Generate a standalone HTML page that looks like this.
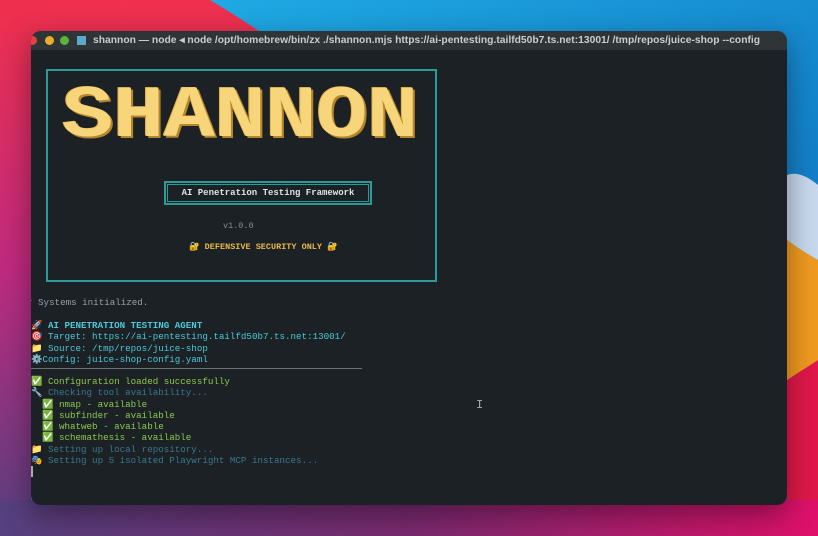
<!DOCTYPE html>
<html><head><meta charset="utf-8"><style>
*{margin:0;padding:0;box-sizing:border-box}
body{width:818px;height:536px;overflow:hidden;position:relative;font-family:"Liberation Mono",monospace;background:#6a3a8a}
.bg{position:absolute;inset:0}
.win{position:absolute;left:31px;top:31px;width:756px;height:474px;border-radius:10px;background:#1b2124;overflow:hidden;box-shadow:0 10px 30px rgba(0,0,0,.4)}
.tb{height:19px;background:#2f3537;color:#c8cccc;font:bold 10.3px "Liberation Sans",sans-serif;white-space:nowrap;line-height:19px;position:relative}
.dot{position:absolute;top:5px;width:9px;height:9px;border-radius:50%}
.box{position:absolute;left:15px;top:38px;width:391px;height:213px;border:2px solid #2b9b98}
.logo{position:absolute;left:14px;top:10px;font:bold 80px "Liberation Mono",monospace;letter-spacing:-0.5px;color:#f7d57a;text-shadow:2px 2px 0 #b8862a,-1px -1px 0 #e8b64a;transform:scale(1.07,0.92);transform-origin:top left;line-height:80px;white-space:nowrap}
.ib{position:absolute;left:116px;top:110px;width:208px;height:24px;border:2px solid #2b9b98;outline:1px solid #2b9b98;outline-offset:-4px;color:#e0e4e4;font-size:9px;font-weight:bold;text-align:center;line-height:20px}
.t{position:absolute;font-size:9.2px;white-space:pre;line-height:11.3px}
</style></head><body>
<svg class="bg" width="818" height="536" viewBox="0 0 818 536">
<defs>
<linearGradient id="b" x1="0" y1="0" x2="1" y2="1"><stop offset="0" stop-color="#22b4ea"/><stop offset="1" stop-color="#0b64b8"/></linearGradient>
<linearGradient id="bot" x1="0" y1="0" x2="1" y2="0"><stop offset="0" stop-color="#56407f"/><stop offset=".5" stop-color="#7a2a70"/><stop offset="1" stop-color="#e0106a"/></linearGradient>
<linearGradient id="l" x1="0" y1="0" x2="0" y2="1"><stop offset="0" stop-color="#f0304c"/><stop offset=".5" stop-color="#c02a80"/><stop offset="1" stop-color="#56407f"/></linearGradient>
</defs>
<rect width="818" height="536" fill="url(#b)"/>
<path d="M0 0H210Q260 30 300 60L31 60V536H0Z" fill="url(#l)"/>
<path d="M787 175Q800 170 818 185V260Q800 250 787 240Z" fill="#c8d8ee"/>
<path d="M787 240Q800 250 818 260V380L787 400Z" fill="#f09a20"/>
<path d="M787 380L818 360V536H787Z" fill="#e0184a"/>
<rect x="0" y="500" width="818" height="36" fill="url(#bot)"/>
</svg>
<div class="win">
<div class="tb"><span class="dot" style="left:-3px;background:#e0443e"></span><span class="dot" style="left:14px;background:#e8b02a"></span><span class="dot" style="left:29px;background:#5cb23c"></span><span style="position:absolute;left:46px;top:5px;width:9px;height:9px;background:#5ea8c8"></span><span style="position:absolute;left:62px">shannon — node ◂ node /opt/homebrew/bin/zx ./shannon.mjs https://ai-pentesting.tailfd50b7.ts.net:13001/ /tmp/repos/juice-shop --config</span></div>
<div class="box">
<div class="logo">SHANNON</div>
<div class="ib">AI Penetration Testing Framework</div>
<div class="t" style="left:175px;top:150px;color:#8a9090;font-size:8.5px">v1.0.0</div>
<div class="t" style="left:141px;top:171px;color:#e8b84a;font-weight:bold;font-size:8.5px">🔐 DEFENSIVE SECURITY ONLY 🔐</div>
</div>
<div class="t" style="left:-4px;top:266px;color:#9aa0a0">✓ Systems initialized.</div>
<div class="t" style="left:0;top:289px;color:#4ec8d8"><b>🚀 AI PENETRATION TESTING AGENT</b>
🎯 Target: https://ai-pentesting.tailfd50b7.ts.net:13001/
📁 Source: /tmp/repos/juice-shop
⚙️Config: juice-shop-config.yaml</div>
<div style="position:absolute;left:0;top:337px;width:331px;height:1px;background:#6a7070"></div>
<div class="t" style="left:0;top:345px;color:#8cc850">✅ Configuration loaded successfully
<span style="color:#3a7890">🔧 Checking tool availability...</span>
  ✅ nmap - available
  ✅ subfinder - available
  ✅ whatweb - available
  ✅ schemathesis - available
<span style="color:#3a7890">📁 Setting up local repository...
🎭 Setting up 5 isolated Playwright MCP instances...</span></div>
<div style="position:absolute;left:0;top:435px;width:2px;height:11px;background:#aaa"></div>
<div class="t" style="left:445px;top:369px;color:#aaa;font-size:12px">I</div>
</div>
</body></html>
